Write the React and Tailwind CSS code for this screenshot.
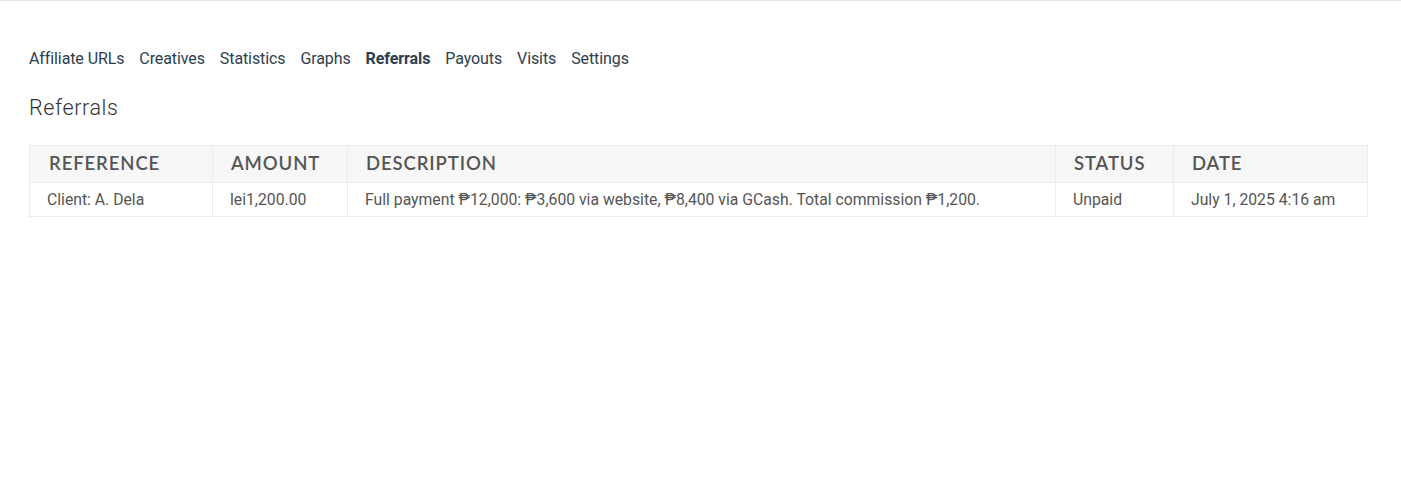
export default function App() {
  const th = "border border-[#ececec] bg-[#f7f7f7] text-left font-semibold uppercase text-[18.5px] text-[#555] px-[18px] h-[37px] tracking-[0.9px]";
  const td = "border border-[#ececec] text-left text-[15.75px] text-[#555] px-[17px] h-[34px]";
  return (
    <div className="w-[1401px] h-[480px] bg-white border-t border-[#e5e5e5]" style={{ fontFamily: "Roboto, 'Liberation Sans', sans-serif" }}>
      <div className="pl-[29px] pt-[46px]">
        <nav className="flex gap-[15px] text-[16px] text-[#2d3e4e] leading-[24px] tracking-[-0.1px]">
          <span>Affiliate URLs</span>
          <span>Creatives</span>
          <span>Statistics</span>
          <span>Graphs</span>
          <span className="font-bold">Referrals</span>
          <span>Payouts</span>
          <span>Visits</span>
          <span>Settings</span>
        </nav>
        <h2 className="mt-[23px] text-[21.5px] font-light text-[#333] leading-[28px] tracking-[0.6px]">Referrals</h2>
        <table className="mt-[23px] w-[1339px] border-collapse">
          <thead>
            <tr style={{ fontFamily: "Lato, 'Open Sans', sans-serif" }}>
              <th className={th + " w-[183px] pl-[19px]"}>Reference</th>
              <th className={th + " w-[135px]"}>Amount</th>
              <th className={th + " w-[708px]"}>Description</th>
              <th className={th + " w-[118px]"}>Status</th>
              <th className={th}>Date</th>
            </tr>
          </thead>
          <tbody>
            <tr>
              <td className={td}>Client: A. Dela</td>
              <td className={td}>lei1,200.00</td>
              <td className={td}>Full payment ₱12,000: ₱3,600 via website, ₱8,400 via GCash. Total commission ₱1,200.</td>
              <td className={td}>Unpaid</td>
              <td className={td}>July 1, 2025 4:16 am</td>
            </tr>
          </tbody>
        </table>
      </div>
    </div>
  );
}
